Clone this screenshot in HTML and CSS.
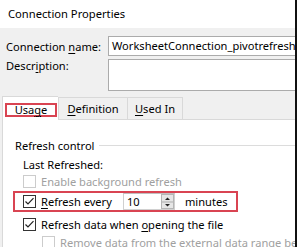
FILE: index.html
```html
<!DOCTYPE html>
<html>
<head>
<meta charset="utf-8">
<link rel="stylesheet" href="styles.css">
</head>
<body>
<div class="window">
  <div class="titlebar">Connection Properties</div>
  <div class="body">
    <div class="field-row">
      <div class="field-label">Connection <u>n</u>ame:</div>
      <div class="input">WorksheetConnection_pivotrefreshexample</div>
    </div>
    <div class="field-row desc-row">
      <div class="field-label">Descr<u>i</u>ption:</div>
      <div class="textarea"></div>
    </div>
    <div class="tabs">
      <div class="tab active"><span class="mark">Usa<u>g</u>e</span></div>
      <div class="tab"><u>D</u>efinition</div>
      <div class="tab"><u>U</u>sed In</div>
      <div class="tab-rest"></div>
    </div>
    <div class="panel">
      <div class="group-title"><span>Refresh control</span><span class="rule"></span></div>
      <div class="row info">Last Refreshed:</div>
      <div class="row check disabled">
        <span class="cb"></span><span>Enable background refresh</span>
      </div>
      <div class="highlight">
        <span class="cb checked"><svg viewBox="0 0 13 13" width="13" height="13"><path d="M2.5 6.5 L5 9 L10.5 3.2" fill="none" stroke="#222" stroke-width="1.2"/></svg></span>
        <span class="every-label"><u>R</u>efresh every</span>
        <span class="spin">
          <span class="spin-value">10</span>
          <span class="spin-btns">
            <svg viewBox="0 0 11 14" width="11" height="14"><path d="M3 5 L5.5 2.5 L8 5 Z" fill="#222"/><line x1="0" y1="7" x2="11" y2="7" stroke="#adadad"/><path d="M3 9 L5.5 11.5 L8 9 Z" fill="#222"/></svg>
          </span>
        </span>
        <span class="minutes">minutes</span>
      </div>
      <div class="row check">
        <span class="cb checked"><svg viewBox="0 0 13 13" width="13" height="13"><path d="M2.5 6.5 L5 9 L10.5 3.2" fill="none" stroke="#222" stroke-width="1.2"/></svg></span>
        <span>Refresh data when <u>o</u>pening the file</span>
      </div>
      <div class="row check disabled sub">
        <span class="cb"></span><span>Remove data from the external data range before saving the workbook</span>
      </div>
    </div>
  </div>
</div>
</body>
</html>
```
FILE: styles.css
```css
* { box-sizing: border-box; }
html, body {
  margin: 0;
  padding: 0;
  width: 297px;
  height: 247px;
  overflow: hidden;
  background: #f0f0f0;
}
body {
  font-family: "Noto Sans", "Open Sans", sans-serif;
  font-size: 11.1px;
  color: #000;
}
u { text-decoration: underline; text-underline-offset: 2px; text-decoration-thickness: 1px; }
.window {
  width: 297px;
  height: 247px;
  border-right: 2px solid #111;
  background: #f0f0f0;
  overflow: hidden;
  display: flex;
  flex-direction: column;
}
.titlebar {
  height: 28px;
  line-height: 28px;
  background: #fff;
  padding-left: 8px;
  font-size: 11.2px;
  flex: none;
}
.body {
  flex: 1;
  display: flex;
  flex-direction: column;
}
.field-row {
  display: flex;
  margin-top: 8px;
  padding-left: 6px;
  align-items: center;
}
.field-label {
  width: 102px;
  flex: none;
  white-space: nowrap;
}
.input {
  height: 20px;
  line-height: 18px;
  border: 1px solid #ababab;
  background: #fff;
  padding-left: 3px;
  width: 200px;
  flex: none;
  white-space: nowrap;
  overflow: hidden;
}
.desc-row {
  margin-top: 3px;
  align-items: flex-start;
}
.desc-row .field-label { margin-top: -1px; }
.textarea {
  height: 32px;
  width: 200px;
  flex: none;
  border: 1px solid #ababab;
  background: #fff;
}
.tabs {
  display: flex;
  margin-top: 5px;
  padding-left: 2px;
  height: 24px;
  align-items: flex-end;
}
.tab {
  height: 23px;
  border: 1px solid #d9d9d9;
  border-left: none;
  background: #f0f0f0;
  display: flex;
  align-items: center;
  justify-content: center;
  white-space: nowrap;
}
.tab:nth-child(2) { width: 70px; border-left: 1px solid #d9d9d9; }
.tab:nth-child(3) { width: 55px; }
.tab.active {
  width: 56px;
  height: 24px;
  background: #fff;
  border: 1px solid #d9d9d9;
  border-bottom: none;
  border-right: none;
  align-items: flex-start;
  padding-top: 6px;
  padding-left: 1px;
}
.tab-rest {
  flex: 1;
  border-bottom: 1px solid #d9d9d9;
  height: 1px;
}
.mark {
  display: block;
  width: 52px;
  height: 14px;
  line-height: 10px;
  border: 2px solid #d94452;
  text-align: center;
}
.panel {
  flex: 1;
  background: #fff;
  border-left: 1px solid #d9d9d9;
  border-bottom: 1px solid #d9d9d9;
  margin-left: 2px;
  display: flex;
  flex-direction: column;
}
.group-title {
  display: flex;
  align-items: center;
  height: 16px;
  margin-top: 17px;
  margin-left: 12px;
  white-space: nowrap;
}
.rule {
  flex: 1;
  height: 1px;
  background: #dcdcdc;
  margin-left: 5px;
}
.row {
  display: flex;
  align-items: center;
  height: 16px;
  margin-left: 20px;
  white-space: nowrap;
}
.info { margin-top: 3px; }
.check { gap: 5px; }
.disabled { color: #a0a0a0; margin-top: 1px; }
.cb {
  width: 13px;
  height: 13px;
  flex: none;
  border: 1px solid #333;
  background: #fff;
  display: block;
}
.cb svg { display: block; margin: -1px; }
.disabled .cb { border-color: #cccccc; }
.highlight {
  display: flex;
  align-items: center;
  margin-top: 2px;
  margin-left: 10px;
  width: 225px;
  height: 21px;
  border: 2px solid #d94452;
  padding-left: 8px;
  white-space: nowrap;
}
.every-label {
  width: 82px;
  margin-left: 5px;
  flex: none;
}
.spin {
  display: flex;
  width: 52px;
  height: 17px;
  border: 1px solid #d0d0d0;
  border-top-color: #c0c0c0;
  background: #fff;
  align-items: stretch;
}
.spin-value {
  flex: 1;
  padding-left: 3px;
  line-height: 15px;
}
.spin-btns {
  width: 13px;
  border: 1px solid #b5b5b5;
  background: #e6e6e6;
  display: flex;
  align-items: center;
  justify-content: center;
}
.spin-btns svg { display: block; }
.minutes { margin-left: 10px; }
.highlight + .row { margin-top: 4px; }
.sub { margin-left: 39px; margin-top: 2px; }
```
